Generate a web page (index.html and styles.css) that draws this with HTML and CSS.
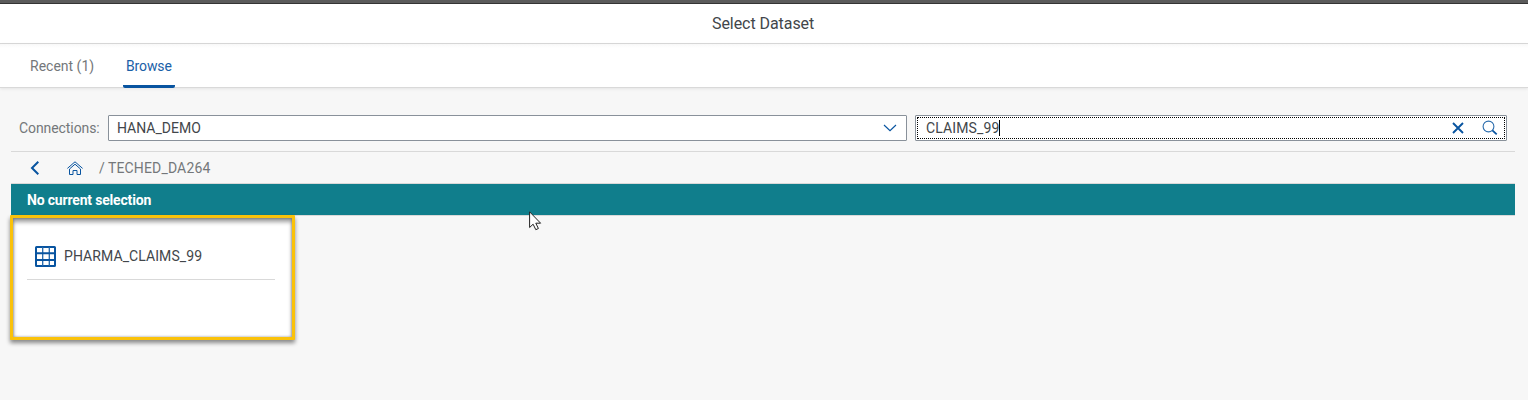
FILE: index.html
```html
<!DOCTYPE html>
<html lang="en">
<head>
<meta charset="utf-8">
<title>Select Dataset</title>
<link rel="stylesheet" href="styles.css">
</head>
<body>
<div class="topbar"></div>
<header class="title"><span class="title-text">Select Dataset</span></header>
<nav class="tabs">
  <a class="tab recent"><span>Recent (1)</span></a>
  <a class="tab active"><span>Browse</span></a>
</nav>
<main class="content">
  <div class="filters">
    <label class="label"><span>Connections:</span></label>
    <div class="field select">
      <span class="select-text">HANA_DEMO</span>
      <svg class="chevron" width="14" height="8" viewBox="0 0 14 8"><path d="M1 1l6 5.6L13 1" fill="none" stroke="#0854a0" stroke-width="1.2"/></svg>
    </div>
    <div class="field search">
      <div class="search-inner">
        <span class="search-text">CLAIMS_99</span><i class="caret"></i>
        <svg class="clear" width="12" height="12" viewBox="0 0 12 12"><path d="M1 1l10 10M11 1L1 11" fill="none" stroke="#0854a0" stroke-width="1.9"/></svg>
        <svg class="lens" width="16" height="16" viewBox="0 0 16 16"><circle cx="6.5" cy="6.5" r="5.4" fill="none" stroke="#2c6dad" stroke-width="1.1"/><path d="M10.400 10.400l4.300 4" fill="none" stroke="#0854a0" stroke-width="1.8"/></svg>
      </div>
    </div>
  </div>
  <div class="crumbs">
    <svg class="back" width="10" height="14" viewBox="0 0 10 14"><path d="M8.3 .8L2 7l6.300 6.200" fill="none" stroke="#0854a0" stroke-width="2"/></svg>
    <svg class="home" width="16" height="14" viewBox="0 0 16 14"><g fill="none" stroke="#0854a0" stroke-width="1"><path d="M.4 7.400L8 .8l7.600 6.600"/><path d="M2.500 8L8 3.200 13.500 8v5.500h-3.500V9.500H6v4H2.500z"/></g></svg>
    <span class="slash">/</span>
    <span class="path">TECHED_DA264</span>
  </div>
  <div class="selection"><span class="selection-text">No current selection</span></div>
  <section class="results">
    <div class="item">
      <svg class="table-icon" width="21" height="21" viewBox="0 0 21 21"><rect x="1" y="1" width="19" height="19" rx=".5" fill="#fff" stroke="#0854a0" stroke-width="2"/><path d="M7.700 1v19M14.300 1v19" fill="none" stroke="#2468ab" stroke-width="1.300"/><path d="M0 7.300h21M0 14h21" fill="none" stroke="#0854a0" stroke-width="2"/></svg>
      <span class="item-text">PHARMA_CLAIMS_99</span>
    </div>
  </section>
</main>
<svg class="cursor" width="13" height="20" viewBox="0 0 13 20"><path d="M.6 .8v15.700l3.500-3.300 2.700 5.500 2.600-1.200-2.600-5.300h4.800z" fill="#fff" stroke="#222" stroke-width="1"/></svg>
</body>
</html>
```
FILE: styles.css
```css
* { box-sizing: border-box; }
body {
  margin: 0;
  height: 400px;
  overflow: hidden;
  background: #f7f7f7;
  font: 14px/20px Roboto, "Liberation Sans", sans-serif;
  color: #42464a;
}
svg { display: block; flex: none; }
span { white-space: nowrap; }
.topbar { height: 4px; background: #5b5b5b; border-bottom: 1px solid #343434; }
.title {
  height: 40px;
  display: flex;
  align-items: center;
  padding-left: 712px;
  background: #fff;
  border-bottom: 1px solid #d9d9d9;
  font-size: 16px;
}
.title-text { letter-spacing: -.06px; }
.tabs {
  height: 44px;
  display: flex;
  gap: 29px;
  padding-left: 30px;
  background: linear-gradient(#f8f8f8, #fff 4px);
  border-bottom: 1px solid #d9d9d9;
  box-shadow: 0 1px 3px rgba(0, 0, 0, .08);
}
.tab { height: 44px; padding-top: 12px; color: #74777a; }
.recent { width: 64px; }
.active {
  width: 52px;
  padding-left: 3px;
  color: #1a60a7;
  letter-spacing: -.12px;
  background: linear-gradient(#0854a0, #0854a0) 0 100% / 100% 3px no-repeat;
  border-radius: 2px;
}
.content { padding: 27px 13px 0 11px; }
.filters {
  height: 37px;
  display: flex;
  border-bottom: 1px solid #d9d9d9;
}
.label { width: 97px; padding: 3px 0 0 8px; color: #74777a; letter-spacing: -.08px; }
.field { height: 26px; background: #fff; border: 1px solid #89919a; border-radius: 1px; }
.select {
  width: 799px;
  display: flex;
  align-items: center;
  justify-content: space-between;
  padding: 0 9px 0 8px;
}
.search { width: 592px; margin-left: 8px; padding: 1px; }
.search-inner { height: 22px; display: flex; align-items: center; border: 1px dotted #000; padding: 0 6px 0 8px; }
.search-text { letter-spacing: .12px; }
.caret { width: 1px; height: 16px; background: #000; }
.clear { margin-left: auto; margin-right: 18px; }
.crumbs { height: 32px; display: flex; align-items: center; padding-left: 19px; color: #74777a; border-bottom: 1px solid #d9d9d9; }
.home { margin-left: 27px; }
.slash { width: 9px; margin-left: 16px; }
.path { letter-spacing: .15px; }
.selection {
  height: 32px;
  padding: 6px 16px 0;
  background: #107e8c;
  border-bottom: 1px solid #d9d9d9;
  color: #fff;
  font-weight: 700;
  letter-spacing: -.18px;
}
.filters, .crumbs, .selection { width: 1504px; }
.results {
  position: relative;
  width: 285px;
  height: 125px;
  margin: -1px 0 0 -1px;
  padding: 14px 13px;
  background: #fff;
  border: 3px solid #fac20a;
  border-radius: 1px;
  box-shadow: 0 3px 4px rgba(0, 0, 0, .45), inset 0 4px 4px rgba(0, 0, 0, .38), inset 0 0 2px 1px rgba(0, 0, 0, .2);
}
.item { width: 248px; height: 48px; margin-left: 1px; display: flex; align-items: center; padding: 0 8px; gap: 8px; border-bottom: 1px solid #d9d9d9; }
.table-icon { margin-top: 2px; }
.item-text { letter-spacing: .08px; }
.cursor { position: absolute; left: 529px; top: 211px; }
```
